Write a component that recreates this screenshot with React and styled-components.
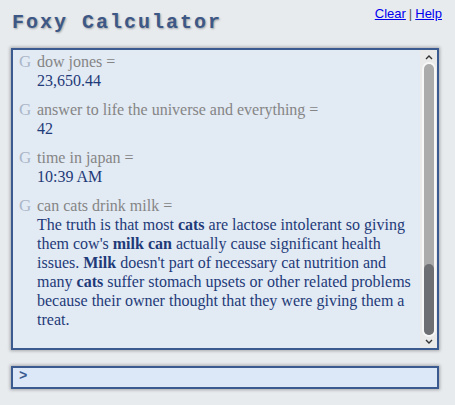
import React from "react";
import styled, { createGlobalStyle } from "styled-components";

const Global = createGlobalStyle`
  html, body { margin: 0; padding: 0; }
  body {
    background: #e8ebee;
    font-family: "Liberation Serif", "Times New Roman", serif;
  }
`;

const Page = styled.div`
  width: 455px;
  height: 405px;
  box-sizing: border-box;
  padding: 0 16px 0 11px;
  display: flex;
  flex-direction: column;
`;

const Header = styled.header`
  display: flex;
  justify-content: space-between;
  align-items: flex-start;
  padding-top: 6px;
  margin-right: -3px;
`;

const Title = styled.h1`
  margin: 5px 0 0 1px;
  font-family: "Liberation Mono", "Courier New", monospace;
  font-weight: bold;
  font-size: 20px;
  line-height: 23px;
  letter-spacing: 2px;
  color: #3d5886;
  text-shadow: 1px 1px 2px rgba(0, 0, 0, 0.3);
`;

const Links = styled.nav`
  font-family: "Liberation Sans", Arial, sans-serif;
  font-size: 13px;
  line-height: 15px;
  color: #555;
  display: flex;
  gap: 3px;
`;

const Link = styled.a`
  color: #0000ee;
  text-decoration: underline;
  cursor: pointer;
`;

const Panel = styled.section`
  margin-top: 14px;
  height: 302px;
  box-sizing: border-box;
  border: 2px solid #3b5a8f;
  background: #e2eaf4;
  box-shadow: 0 0 3px 1px rgba(0, 0, 0, 0.28);
  display: flex;
`;

const Log = styled.div`
  flex: 1;
  overflow: hidden;
  padding: 2px 8px 0 6px;
  font-size: 16px;
  line-height: 19px;
`;

const Entry = styled.div`
  display: flex;
  margin-bottom: 10px;
`;

const Mark = styled.span`
  width: 18px;
  flex: none;
  color: #aab6c8;
  font-size: 17px;
`;

const Body = styled.div`
  flex: 1;
`;

const Query = styled.div`
  color: #858585;
`;

const Answer = styled.div`
  color: #1e3a78;
  b { font-weight: bold; }
`;

const Scrollbar = styled.div`
  width: 17px;
  flex: none;
  background: #eaeaea;
  display: flex;
  flex-direction: column;
  align-items: center;
`;

const Arrow = styled.div`
  height: ${(p) => p.$h}px;
  display: flex;
  align-items: center;
  justify-content: center;
`;

const Track = styled.div`
  flex: 1;
  width: 10px;
  border-radius: 5px;
  background: #ababab;
  display: flex;
  flex-direction: column;
  justify-content: flex-end;
  box-shadow: 0 0 0 2px rgba(255, 255, 255, 0.6);
`;

const Thumb = styled.div`
  height: 71px;
  border-radius: 5px;
  background: #6e6f73;
`;

const InputBar = styled.div`
  margin-top: 16px;
  height: 23px;
  box-sizing: border-box;
  border: 2px solid #3b5a8f;
  background: #dce8f8;
  box-shadow: 0 0 3px 1px rgba(0, 0, 0, 0.28);
  display: flex;
  align-items: center;
  padding-left: 6px;
`;

const Prompt = styled.span`
  font-family: "Liberation Mono", "Courier New", monospace;
  font-weight: bold;
  font-size: 14px;
  color: #3b5a8f;
  margin-top: -3px;
`;

const Field = styled.input`
  flex: 1;
  border: none;
  outline: none;
  background: transparent;
  font-family: "Liberation Serif", serif;
  font-size: 16px;
  color: #1e3a78;
`;

const Chevron = ({ down }) => (
  <svg width="8" height="5" viewBox="0 0 8 5">
    <path
      d={down ? "M1 1 L4 4 L7 1" : "M1 4 L4 1 L7 4"}
      fill="none"
      stroke="#333"
      strokeWidth="1.4"
    />
  </svg>
);

const entries = [
  { q: "dow jones =", a: "23,650.44" },
  { q: "answer to life the universe and everything =", a: "42" },
  { q: "time in japan =", a: "10:39 AM" },
  {
    q: "can cats drink milk =",
    a: (
      <>
        The truth is that most <b>cats</b> are lactose intolerant so giving
        them cow's <b>milk can</b> actually cause significant health issues.{" "}
        <b>Milk</b> doesn't part of necessary cat nutrition and many{" "}
        <b>cats</b> suffer stomach upsets or other related problems because
        their owner thought that they were giving them a treat.
      </>
    ),
  },
];

export default function App() {
  return (
    <>
      <Global />
      <Page>
        <Header>
          <Title>Foxy Calculator</Title>
          <Links>
            <Link>Clear</Link>
            <span>|</span>
            <Link>Help</Link>
          </Links>
        </Header>
        <Panel>
          <Log>
            {entries.map((e, i) => (
              <Entry key={i}>
                <Mark>G</Mark>
                <Body>
                  <Query>{e.q}</Query>
                  <Answer>{e.a}</Answer>
                </Body>
              </Entry>
            ))}
          </Log>
          <Scrollbar>
            <Arrow $h={14}>
              <Chevron />
            </Arrow>
            <Track>
              <Thumb />
            </Track>
            <Arrow $h={13}>
              <Chevron down />
            </Arrow>
          </Scrollbar>
        </Panel>
        <InputBar>
          <Prompt>&gt;</Prompt>
          <Field />
        </InputBar>
      </Page>
    </>
  );
}
